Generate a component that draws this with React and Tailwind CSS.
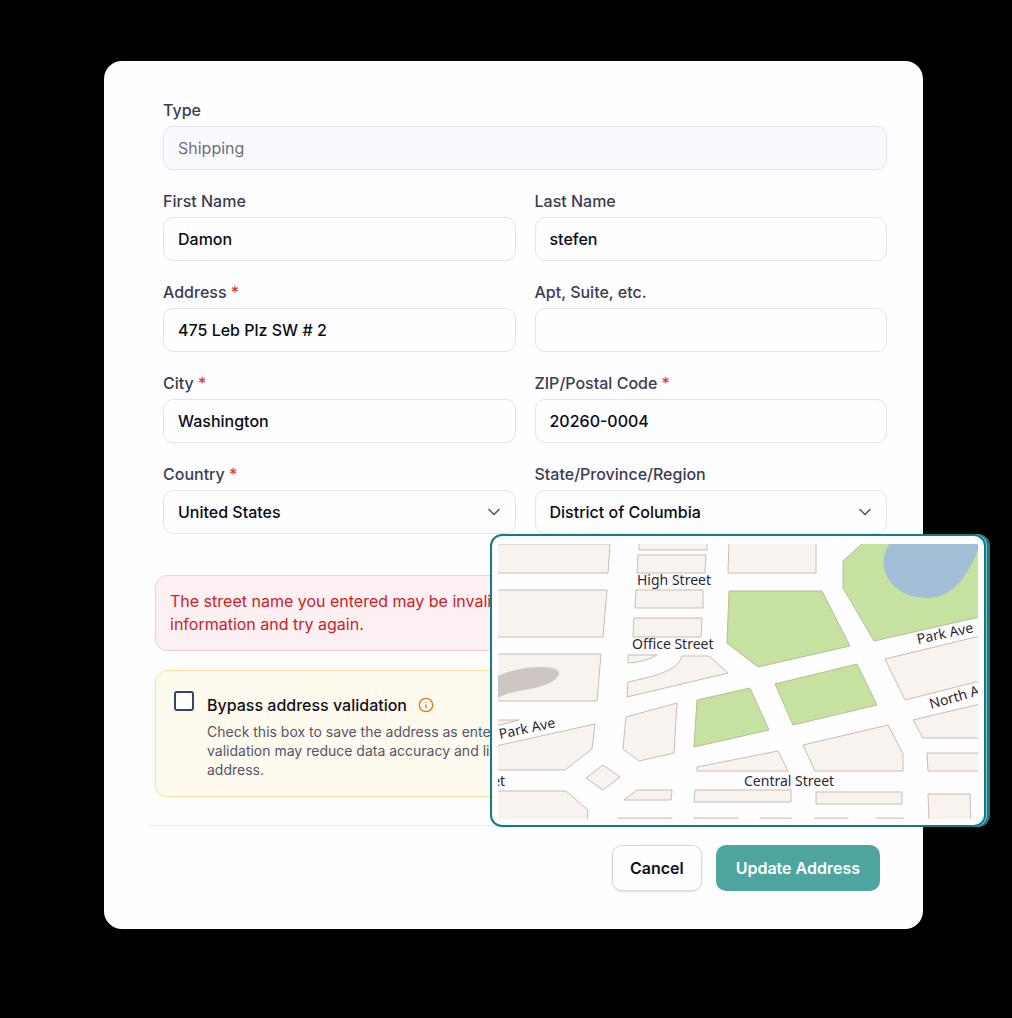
import { useId } from "react";
import { ChevronDown, Info } from "lucide-react";

const controlClass =
  "h-11 w-full appearance-none rounded-[10px] border border-[#e4e2ea] bg-transparent px-[14px] text-base font-medium text-[#0b0b12] outline-none focus:border-[#4ea5a0] disabled:bg-[#faf9ff] disabled:font-normal disabled:text-[#70707a]";

const blocks = [
  "M-2 0H112L110 29H-2Z",
  "M-2 46H109L105 93H-2Z",
  "M-2 110H103L99 157H-2Z",
  "M141 -2H209V6H141Z",
  "M140 11H208L207 29H139Z",
  "M138 46H205L205 64H137Z",
  "M136 74H204L203 93H135Z",
  "M130 111H159Q148 118 130 119Z",
  "M184 112H211L230 129L129 153L130 138C152 133 180 128 184 112Z",
  "M231 -2H318V29H230Z",
  "M482 92L387 115L407 156L482 137Z",
  "M128 173L179 159L176 209L141 217L125 205Z",
  "M-2 176H21L-2 182Z",
  "M-2 202L97 180L94 205L67 226H-2Z",
  "M-2 247H68L90 266L89 278H-2Z",
  "M105 221L122 233L105 246L88 234Z",
  "M139 246H174L173 256H126Z",
  "M197 246H293V258H196Z",
  "M318 248H404V260H318Z",
  "M430 250H472L473 278H431Z",
  "M199 223L280 207L290 227H199Z",
  "M305 201L390 181L405 210V227H317Z",
  "M415 176L482 160V194H425Z",
  "M429 209H482V227H430Z",
  "M120 274H174V278H120Z",
  "M196 274H240V278H196Z",
  "M262 274H293V278H262Z",
  "M317 274H350V278H317Z",
  "M378 274H405V278H378Z",
];

const parks = [
  "M231 47H324L352 102L260 123L229 99Z",
  "M366 -2L345 17V44L376 97L482 73V-2Z",
  "M277 140L359 120L379 161L295 181Z",
  "M199 156L252 144L271 186L196 203Z",
];

export default function App() {
  return (
    <main className="min-h-screen bg-black pt-[61px] pr-[89px] pb-[89px] pl-[104px] font-['Inter',sans-serif]">
      <div className="relative rounded-[18px] bg-[#fefdff]">
        <form onSubmit={(event) => event.preventDefault()}>
          <div className="grid grid-cols-2 gap-x-[19px] gap-y-[21px] pt-[39px] pr-9 pl-[59px]">
            <div className="col-span-2">
              <TextField label="Type" value="Shipping" disabled />
            </div>
            <TextField label="First Name" value="Damon" />
            <TextField label="Last Name" value="stefen" />
            <TextField label="Address" value="475 Leb Plz SW # 2" required />
            <TextField label="Apt, Suite, etc." />
            <TextField label="City" value="Washington" required />
            <TextField label="ZIP/Postal Code" value="20260-0004" required />
            <SelectField
              label="Country"
              options={["United States", "Canada"]}
              required
            />
            <SelectField
              label="State/Province/Region"
              options={["District of Columbia", "Maryland", "Virginia"]}
            />
          </div>

          <div className="mt-[41px] flex flex-col gap-[19px] pr-7 pl-[51px]">
            <p
              role="alert"
              className="rounded-xl border border-[#f6cdd3] bg-[#fdf0f3] px-[14px] py-[14px] text-base leading-[23px] text-[#cb2229]"
            >
              The street name you entered may be invalid or missing. Please
              check your address information and try again.
            </p>

            <div className="flex gap-[13px] rounded-xl border border-[#f8e29a] bg-[#fffaee] px-[18px] pt-5 pb-[17px]">
              <input
                id="bypass"
                type="checkbox"
                aria-describedby="bypass-hint"
                className="size-5 shrink-0 appearance-none rounded-[3px] border-2 border-[#34466b] bg-white checked:bg-[#34466b]"
              />
              <div>
                <div className="flex h-7 items-center gap-[11px]">
                  <label
                    htmlFor="bypass"
                    className="text-base font-medium text-[#11111c]"
                  >
                    Bypass address validation
                  </label>
                  <Info className="size-4 text-[#dd7a14]" />
                </div>
                <p
                  id="bypass-hint"
                  className="mt-[3px] text-sm leading-[19px] text-[#55556a]"
                >
                  Check this box to save the address as entered without
                  verification. Please note that bypassing validation may reduce
                  data accuracy and limit our ability to correct or deliver
                  orders sent to this address.
                </p>
              </div>
            </div>
          </div>

          <div className="mt-7 mr-9 ml-11 flex justify-end gap-[14px] border-t border-[#eceaf0] pt-[19px] pr-[7px] pb-[38px]">
            <button
              type="button"
              className="h-[46px] rounded-[10px] border border-[#d9d8df] px-[17px] text-base font-semibold text-[#11111f] shadow-sm"
            >
              Cancel
            </button>
            <button
              type="submit"
              className="h-[46px] rounded-[10px] bg-[#4ea5a0] px-5 text-base font-semibold text-white"
            >
              Update Address
            </button>
          </div>
        </form>

        <div className="absolute -right-[63px] bottom-[102px] rounded-xl border-2 border-[#147b85] bg-[#fefdff] p-[6px] pt-2 shadow-[1px_0_0_#8fc9cb,4px_0_0_#147b85]">
          <StreetMap />
        </div>
      </div>
    </main>
  );
}

function FieldLabel({ htmlFor, children, required }) {
  return (
    <label
      htmlFor={htmlFor}
      className="mb-[6px] block text-base leading-5 font-medium text-[#3c3c50]"
    >
      {children}
      {required && <span className="text-[#e5333b]"> *</span>}
    </label>
  );
}

function TextField({ label, value = "", required, disabled }) {
  const id = useId();

  return (
    <div>
      <FieldLabel htmlFor={id} required={required}>
        {label}
      </FieldLabel>
      <input
        id={id}
        type="text"
        defaultValue={value}
        disabled={disabled}
        className={controlClass}
      />
    </div>
  );
}

function SelectField({ label, options, required }) {
  const id = useId();

  return (
    <div>
      <FieldLabel htmlFor={id} required={required}>
        {label}
      </FieldLabel>
      <div className="relative">
        <select id={id} className={controlClass}>
          {options.map((option) => (
            <option key={option}>{option}</option>
          ))}
        </select>
        <ChevronDown className="pointer-events-none absolute top-3 right-3 size-5 text-[#5c5c66]" />
      </div>
    </div>
  );
}

function StreetMap() {
  return (
    <svg
      viewBox="0 0 480 275"
      role="img"
      aria-label="Street map"
      className="h-[275px] w-[480px]"
    >
      <g fill="#f9f3ef" stroke="#cbbcae" strokeWidth="1">
        {blocks.map((d) => (
          <path key={d} d={d} />
        ))}
      </g>
      <path
        d="M0 132C15 125 32 123 45 123C56 123 61 126 61 130C60 136 48 142 32 145C20 147 8 149 0 154Z"
        fill="#cec6c3"
      />
      <g fill="#c5e2a0" stroke="#b9bd98" strokeWidth="1">
        {parks.map((d) => (
          <path key={d} d={d} />
        ))}
      </g>
      <path
        d="M391 0C387 7 385 14 386 22C388 40 405 54 429 54C456 54 470 30 480 6V0Z"
        fill="#a2bfd7"
      />
      <g fill="#2b2830" className="font-['Noto_Sans',sans-serif] text-[14px]">
        <text x="139" y="41">High Street</text>
        <text x="134" y="105">Office Street</text>
        <text x="246" y="242">Central Street</text>
        <text x="-83" y="242">Central Street</text>
        <text transform="translate(420 100) rotate(-12)">Park Ave</text>
        <text transform="translate(2 195) rotate(-12)">Park Ave</text>
        <text transform="translate(433 165) rotate(-16)">North Ave</text>
      </g>
    </svg>
  );
}
